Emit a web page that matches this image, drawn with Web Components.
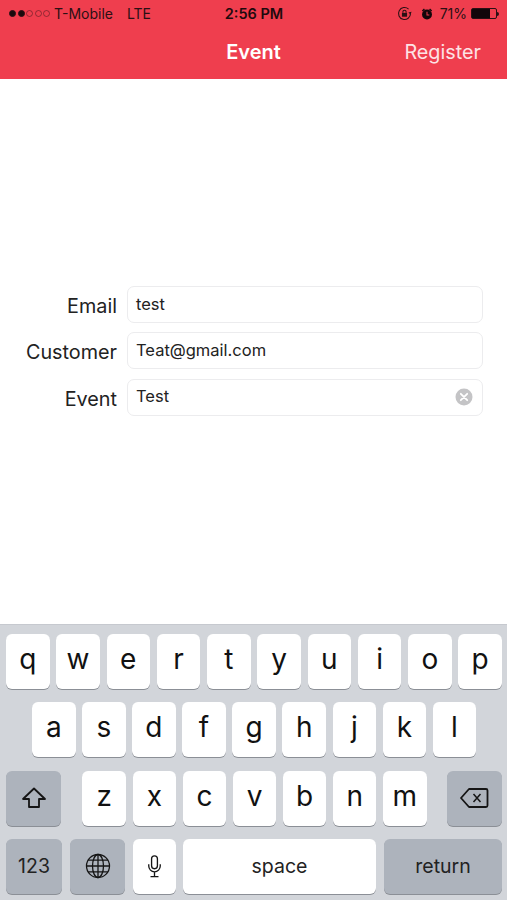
<!DOCTYPE html>
<html>
<head>
<meta charset="utf-8">
<title>Event</title>
<style>
html,body{margin:0;padding:0;background:#fff;}
body{width:507px;height:900px;overflow:hidden;font-family:Inter,"Liberation Sans",sans-serif;}
</style>
</head>
<body>
<event-screen></event-screen>
<script>
class statusBar extends HTMLElement{
    constructor(){
        super();
        this.attachShadow({mode:'open'});
    }
    connectedCallback(){
        this.shadowRoot.innerHTML = `
            <style>
                :host{display:grid;grid-template-columns:1fr auto 1fr;align-items:center;height:27px;padding:0 8px 0 9px;font-size:14px;color:#2a1014;}
                .left,.right{display:flex;align-items:center;}
                .right{justify-content:flex-end;}
                .dots{display:flex;gap:1.5px;margin-right:4px;}
                .dots i{width:7px;height:7px;border-radius:50%;border:1px solid #2a1014;box-sizing:border-box;opacity:.45;}
                .dots i.on{background:#1a0a0d;opacity:1;}
                .lte{margin-left:14px;}
                .time{font-weight:600;font-size:14.5px;color:#1e0a0d;}
                svg{display:block;}
                .batt{display:flex;align-items:center;margin-left:4px;}
                .cell{width:24px;height:9px;border:1px solid #2a1014;border-radius:2px;}
                .cell b{display:block;height:100%;width:75%;background:#12060a;}
                .nub{width:2px;height:4px;background:#2a1014;border-radius:0 2px 2px 0;}
            </style>
            <div class="left">
                <span class="dots"><i class="on"></i><i class="on"></i><i></i><i></i><i></i></span>
                <span>T-Mobile</span><span class="lte">LTE</span>
            </div>
            <div class="time">2:56 PM</div>
            <div class="right">
                <svg width="15" height="15" viewBox="0 0 14 14" fill="none" stroke="#2a1014" stroke-width="1"><path d="M12.6 7A5.6 5.6 0 1 1 10.8 2.9"/><path d="M13.6 5.4 12.6 8 10.6 6Z" fill="#2a1014" stroke="none"/><rect x="4.6" y="6.4" width="4.8" height="3.6" fill="#2a1014" stroke="none"/><path d="M5.5 6.4V5.4a1.5 1.5 0 0 1 3 0v1"/></svg>
                <svg style="margin-left:9px" width="12" height="14" viewBox="0 0 13 14" fill="#12060a"><circle cx="6.5" cy="7.6" r="5.4"/><path d="M1 3.2 3.2 1 4.2 2 2 4.2ZM12 3.2 9.8 1 8.8 2 11 4.2Z"/><path d="M6.5 4.6V8H9" fill="none" stroke="#f03f4f" stroke-width="1.1"/></svg>
                <span style="margin-left:7px">71%</span>
                <span class="batt"><span class="cell"><b></b></span><span class="nub"></span></span>
            </div>
        `;
    }
}
customElements.define("status-bar",statusBar);

class navBar extends HTMLElement{
    constructor(){
        super();
        this.attachShadow({mode:'open'});
    }
    connectedCallback(){
        this.shadowRoot.innerHTML = `
            <style>
                :host{display:block;height:79px;background:#ef3e4e;color:#fff;}
                .row{display:grid;grid-template-columns:1fr auto 1fr;align-items:center;height:50px;padding:0 26px;}
                .title{font-size:20px;font-weight:600;}
                .action{justify-self:end;font-size:19.8px;color:#fde3e5;}
            </style>
            <status-bar></status-bar>
            <div class="row">
                <span></span>
                <span class="title"><slot name="title"></slot></span>
                <span class="action"><slot name="action"></slot></span>
            </div>
        `;
    }
}
customElements.define("nav-bar",navBar);

class formField extends HTMLElement{
    constructor(){
        super();
        this.attachShadow({mode:'open'});
    }
    connectedCallback(){
        const clear = this.hasAttribute('clear') ? `
            <svg class="clear" width="18" height="18" viewBox="0 0 18 18"><circle cx="9" cy="9" r="8.5" fill="#c4c4c6"/><path d="M5.8 5.8 12.2 12.2M12.2 5.8 5.8 12.2" stroke="#fff" stroke-width="1.8" stroke-linecap="round"/></svg>` : '';
        this.shadowRoot.innerHTML = `
            <style>
                :host{display:flex;align-items:center;height:37px;}
                label{width:117px;text-align:right;font-size:19.8px;color:#222;padding-top:3px;}
                .box{display:flex;align-items:center;justify-content:space-between;box-sizing:border-box;width:356px;height:37px;margin-left:10px;padding:0 9px 0 8px;border:1px solid #ececee;border-radius:7px;background:#fff;font-size:16.5px;color:#222;}
                .box span{margin-top:-2px;}
                .clear{display:block;}
            </style>
            <label>${this.getAttribute('label')}</label>
            <div class="box"><span><slot></slot></span>${clear}</div>
        `;
    }
}
customElements.define("form-field",formField);

class kbKey extends HTMLElement{
    constructor(){
        super();
        this.attachShadow({mode:'open'});
    }
    connectedCallback(){
        this.shadowRoot.innerHTML = `
            <style>
                :host{display:flex;align-items:center;justify-content:center;flex:none;box-sizing:border-box;width:43.5px;height:55px;background:#fff;border-radius:6px;box-shadow:0 1px 0 #8b8f96;font-size:28px;color:#111;}
                :host([dark]){background:#adb3bc;}
                :host([small]){font-size:19.5px;color:#222;}
                span{margin-top:-5px;}
                :host([small]) span{margin-top:-1px;}
                :host([icon]) span{margin-top:0;}
                ::slotted(svg){display:block;}
            </style>
            <span><slot></slot></span>
        `;
    }
}
customElements.define("kb-key",kbKey);

class softKeyboard extends HTMLElement{
    constructor(){
        super();
        this.attachShadow({mode:'open'});
    }
    letters(str){
        return str.split('').map(c=>`<kb-key>${c}</kb-key>`).join('');
    }
    connectedCallback(){
        this.shadowRoot.innerHTML = `
            <style>
                :host{display:flex;flex-direction:column;gap:13.3px;box-sizing:border-box;height:276px;padding:9px 5px 0 6px;background:#d2d5da;border-top:1px solid #c6c9cf;}
                .row{display:flex;}
                .top{justify-content:space-between;}
                .mid{gap:6.6px;padding-left:26px;}
                .third{justify-content:space-between;}
                .letters{display:flex;gap:6.6px;margin-left:1px;}
                .bottom{gap:8px;}
            </style>
            <div class="row top">${this.letters('qwertyuiop')}</div>
            <div class="row mid">${this.letters('asdfghjkl')}</div>
            <div class="row third">
                <kb-key dark icon style="width:55px">
                    <svg width="26" height="24" viewBox="0 0 26 24" fill="none" stroke="#151515" stroke-width="1.8" stroke-linejoin="round"><path d="M13 2.5 2 13h6v8h10v-8h6Z"/></svg>
                </kb-key>
                <div class="letters">${this.letters('zxcvbnm')}</div>
                <kb-key dark icon style="width:55px">
                    <svg width="29" height="22" viewBox="0 0 29 22" fill="none" stroke="#151515" stroke-width="1.8" stroke-linejoin="round"><path d="M9 2h17a1.5 1.5 0 0 1 1.5 1.5v15A1.5 1.5 0 0 1 26 20H9L1 11Z"/><path d="M13.5 7 20.5 15M20.5 7 13.5 15" stroke-width="1.5"/></svg>
                </kb-key>
            </div>
            <div class="row bottom">
                <kb-key dark small style="width:56px">123</kb-key>
                <kb-key dark icon style="width:55px">
                    <svg width="26" height="26" viewBox="0 0 26 26" fill="none" stroke="#151515" stroke-width="1.3"><circle cx="13" cy="13" r="11.5"/><ellipse cx="13" cy="13" rx="5.5" ry="11.5"/><path d="M13 1.5v23M1.5 13h23M3.2 7.2h19.6M3.2 18.8h19.6"/></svg>
                </kb-key>
                <kb-key icon style="width:43px">
                    <svg width="15" height="23" viewBox="0 0 16 26" fill="none" stroke="#151515" stroke-width="1.5"><rect x="4.7" y="1" width="6.6" height="14.5" rx="3.3"/><path d="M1.5 10.5v2a6.5 6.5 0 0 0 13 0v-2M8 19v5.5M3.5 24.5h9"/></svg>
                </kb-key>
                <kb-key small style="width:193px;margin-left:-1px">space</kb-key>
                <kb-key dark small style="width:118px">return</kb-key>
            </div>
        `;
    }
}
customElements.define("soft-keyboard",softKeyboard);

class eventScreen extends HTMLElement{
    constructor(){
        super();
        this.attachShadow({mode:'open'});
    }
    connectedCallback(){
        this.shadowRoot.innerHTML = `
            <style>
                :host{display:flex;flex-direction:column;height:900px;}
                main{flex:1;display:flex;flex-direction:column;gap:9.4px;padding-top:207px;box-sizing:border-box;background:#fff;}
            </style>
            <nav-bar><span slot="title">Event</span><span slot="action">Register</span></nav-bar>
            <main>
                <form-field label="Email">test</form-field>
                <form-field label="Customer">Teat@gmail.com</form-field>
                <form-field label="Event" clear>Test</form-field>
            </main>
            <soft-keyboard></soft-keyboard>
        `;
    }
}
customElements.define("event-screen",eventScreen);
</script>
</body>
</html>
